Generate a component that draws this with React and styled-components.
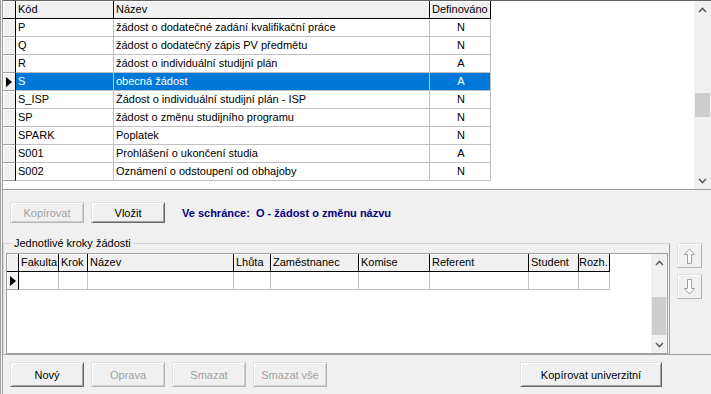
import React from "react"
import styled, { createGlobalStyle } from "styled-components"

const GlobalStyle = createGlobalStyle`
    html, body {
        margin: 0;
        padding: 0;
        background: #f0f0f0;
    }
    body {
        font-family: "Liberation Sans", Arial, sans-serif;
        font-size: 11px;
        color: #000;
    }
    * {
        box-sizing: border-box;
    }
`

const Window = styled.div`
    width: 711px;
    height: 394px;
    display: flex;
    flex-direction: column;
    border-left: 3px double #a0a0a0;
    overflow: hidden;
`

const GridFrame = styled.div`
    display: flex;
    flex: none;
    height: ${(p) => p.$h}px;
    background: #fff;
    border-top: 1px solid ${(p) => p.$top || "#646464"};
    border-bottom: 1px solid #a0a0a0;
    border-left: ${(p) => (p.$side ? "1px solid #a0a0a0" : "none")};
    border-right: ${(p) => (p.$side ? "1px solid #a0a0a0" : "none")};
`

const GridBody = styled.div`
    flex: 1;
`

const Row = styled.div`
    display: flex;
    height: ${(p) => p.$h || 18}px;
`

const Indicator = styled.div`
    width: ${(p) => p.$w || 13}px;
    flex: none;
    background: #f0f0f0;
    border-right: 1px solid #000;
    border-bottom: 1px solid ${(p) => (p.$head ? "#000" : "#a0a0a0")};
    box-shadow: inset 1px 1px #fff;
    display: flex;
    align-items: center;
    justify-content: center;
`

const HeadCell = styled.div`
    width: ${(p) => p.$w}px;
    flex: none;
    background: #f0f0f0;
    border-right: 1px solid #000;
    border-bottom: 1px solid #000;
    box-shadow: inset 1px 1px #fff;
    padding-left: ${(p) => (p.$pad === undefined ? 2 : p.$pad)}px;
    line-height: 17px;
    white-space: nowrap;
    overflow: hidden;
    text-align: ${(p) => p.$align || "left"};
`

const Cell = styled.div`
    width: ${(p) => p.$w}px;
    flex: none;
    background: ${(p) => (p.$sel ? "#0078d7" : "#fff")};
    color: ${(p) => (p.$sel ? "#fff" : "#000")};
    border-right: 1px solid #c0c0c0;
    border-bottom: 1px solid #c0c0c0;
    padding-left: 2px;
    line-height: 17px;
    white-space: nowrap;
    overflow: hidden;
    text-align: ${(p) => p.$align || "left"};
`

const ScrollBar = styled.div`
    width: ${(p) => p.$w || 17}px;
    flex: none;
    background: #f0f0f0;
    display: flex;
    flex-direction: column;
`

const ScrollArrow = styled.div`
    height: 17px;
    flex: none;
    display: flex;
    align-items: center;
    justify-content: center;
`

const ScrollTrack = styled.div`
    flex: 1;
    display: flex;
    flex-direction: column;
`

const Thumb = styled.div`
    margin-top: ${(p) => p.$top}px;
    height: ${(p) => p.$h}px;
    margin-left: 1px;
    margin-right: 1px;
    background: #cdcdcd;
`

const Toolbar = styled.div`
    display: flex;
    align-items: center;
    gap: 7px;
    padding: 0 0 0 7px;
    height: ${(p) => p.$h}px;
    flex: none;
`

const Button = styled.button`
    width: ${(p) => p.$w || 74}px;
    height: ${(p) => p.$h || 21}px;
    margin-left: ${(p) => p.$ml || 0}px;
    flex: none;
    padding: 0;
    font-family: inherit;
    font-size: 11px;
    background: #f0f0f0;
    color: ${(p) => (p.disabled ? "#a0a0a0" : "#000")};
    border: 1px solid;
    border-color: ${(p) =>
        p.disabled ? "#e0e0e0 #b4b4b4 #b4b4b4 #e0e0e0" : "#e3e3e3 #696969 #696969 #e3e3e3"};
    box-shadow: ${(p) =>
        p.disabled
            ? "inset 1px 1px #fff, inset -1px -1px #d0d0d0"
            : "inset 1px 1px #fff, inset -1px -1px #a0a0a0"};
`

const Clipboard = styled.div`
    margin-left: 10px;
    font-weight: bold;
    color: #000080;
    white-space: pre;
`

const Middle = styled.div`
    display: flex;
    height: 118px;
    flex: none;
    margin-top: 2px;
`

const GroupBox = styled.fieldset`
    margin: 0;
    width: 667px;
    flex: none;
    padding: 3px 1px 0 2px;
    border: 1px solid #d5d5d5;
    border-bottom: 1px solid #a0a0a0;
    border-right: 1px solid #a0a0a0;
    legend {
        margin-left: 6px;
        padding: 0 2px;
        line-height: 13px;
    }
`

const SidePanel = styled.div`
    flex: 1;
    display: flex;
    flex-direction: column;
    gap: 6px;
    padding: 6px 0 0 7px;
    border-bottom: 1px solid #a0a0a0;
`

const ArrowButton = styled.div`
    width: 25px;
    height: 25px;
    background: #f0f0f0;
    border: 1px solid;
    border-color: #e0e0e0 #b4b4b4 #b4b4b4 #e0e0e0;
    box-shadow: inset 1px 1px #fff;
    display: flex;
    align-items: center;
    justify-content: center;
`

const rows = [
    ["P", "žádost o dodatečné zadání kvalifikační práce", "N"],
    ["Q", "žádost o dodatečný zápis PV předmětu", "N"],
    ["R", "žádost o individuální studijní plán", "A"],
    ["S", "obecná žádost", "A"],
    ["S_ISP", "Žádost o individuální studijní plán - ISP", "N"],
    ["SP", "žádost o změnu studijního programu", "N"],
    ["SPARK", "Poplatek", "N"],
    ["S001", "Prohlášení o ukončení studia", "A"],
    ["S002", "Oznámení o odstoupení od obhajoby", "N"],
]

const stepCols = [
    ["Fakulta", 40],
    ["Krok", 29],
    ["Název", 146],
    ["Lhůta", 37],
    ["Zaměstnanec", 88],
    ["Komise", 71],
    ["Referent", 99],
    ["Student", 50],
    ["Rozh.", 31, 0],
]

const Chevron = ({ down }) => (
    <svg width="9" height="6" viewBox="0 0 9 6">
        <path
            d={down ? "M1 1 L4.5 4.5 L8 1" : "M1 5 L4.5 1.5 L8 5"}
            fill="none"
            stroke="#606060"
            strokeWidth="1.6"
        />
    </svg>
)

const RowPointer = () => (
    <svg width="6" height="10" viewBox="0 0 6 10">
        <path d="M0 0 L6 5 L0 10 Z" fill="#000" />
    </svg>
)

const HollowArrow = ({ down }) => (
    <svg width="11" height="16" viewBox="0 0 11 16">
        <path
            d={
                down
                    ? "M3.5 0.5 H7.5 V9.5 H10.5 L5.5 15 L0.5 9.5 H3.5 Z"
                    : "M3.5 15.5 H7.5 V6.5 H10.5 L5.5 1 L0.5 6.5 H3.5 Z"
            }
            fill="#fff"
            stroke="#a0a0a0"
            strokeWidth="1"
        />
    </svg>
)

export default function App() {
    return (
        <>
            <GlobalStyle />
            <Window>
                <GridFrame $h={190}>
                    <GridBody>
                        <Row>
                            <Indicator $head />
                            <HeadCell $w={98}>Kód</HeadCell>
                            <HeadCell $w={316}>Název</HeadCell>
                            <HeadCell $w={61}>Definováno</HeadCell>
                        </Row>
                        {rows.map(([code, name, def]) => {
                            const sel = code === "S"
                            return (
                                <Row key={code}>
                                    <Indicator>{sel && <RowPointer />}</Indicator>
                                    <Cell $w={98} $sel={sel}>
                                        {code}
                                    </Cell>
                                    <Cell $w={316} $sel={sel}>
                                        {name}
                                    </Cell>
                                    <Cell $w={61} $sel={sel} $align="center">
                                        {def}
                                    </Cell>
                                </Row>
                            )
                        })}
                    </GridBody>
                    <ScrollBar>
                        <ScrollArrow>
                            <Chevron />
                        </ScrollArrow>
                        <ScrollTrack>
                            <Thumb $top={75} $h={24} />
                        </ScrollTrack>
                        <ScrollArrow>
                            <Chevron down />
                        </ScrollArrow>
                    </ScrollBar>
                </GridFrame>

                <Toolbar $h={45}>
                    <Button $w={74} disabled>
                        Kopírovat
                    </Button>
                    <Button $w={74}>Vložit</Button>
                    <Clipboard>Ve schránce:  O - žádost o změnu názvu</Clipboard>
                </Toolbar>

                <Middle>
                    <GroupBox>
                        <legend>Jednotlivé kroky žádosti</legend>
                        <GridFrame $h={101} $top="#a0a0a0" $side>
                            <GridBody>
                                <Row>
                                    <Indicator $head $w={12} />
                                    {stepCols.map(([label, w, pad]) => (
                                        <HeadCell key={label} $w={w} $pad={pad}>
                                            {label}
                                        </HeadCell>
                                    ))}
                                </Row>
                                <Row>
                                    <Indicator $w={12}>
                                        <RowPointer />
                                    </Indicator>
                                    {stepCols.map(([label, w]) => (
                                        <Cell key={label} $w={w} />
                                    ))}
                                </Row>
                            </GridBody>
                            <ScrollBar $w={16}>
                                <ScrollArrow>
                                    <Chevron />
                                </ScrollArrow>
                                <ScrollTrack>
                                    <Thumb $top={26} $h={38} />
                                </ScrollTrack>
                                <ScrollArrow>
                                    <Chevron down />
                                </ScrollArrow>
                            </ScrollBar>
                        </GridFrame>
                    </GroupBox>
                    <SidePanel>
                        <ArrowButton>
                            <HollowArrow />
                        </ArrowButton>
                        <ArrowButton>
                            <HollowArrow down />
                        </ArrowButton>
                    </SidePanel>
                </Middle>

                <Toolbar $h={39}>
                    <Button $w={74} $h={25}>
                        Nový
                    </Button>
                    <Button $w={74} $h={25} disabled>
                        Oprava
                    </Button>
                    <Button $w={74} $h={25} disabled>
                        Smazat
                    </Button>
                    <Button $w={74} $h={25} disabled>
                        Smazat vše
                    </Button>
                    <Button $w={142} $h={25} $ml={186}>
                        Kopírovat univerzitní
                    </Button>
                </Toolbar>
            </Window>
        </>
    )
}
